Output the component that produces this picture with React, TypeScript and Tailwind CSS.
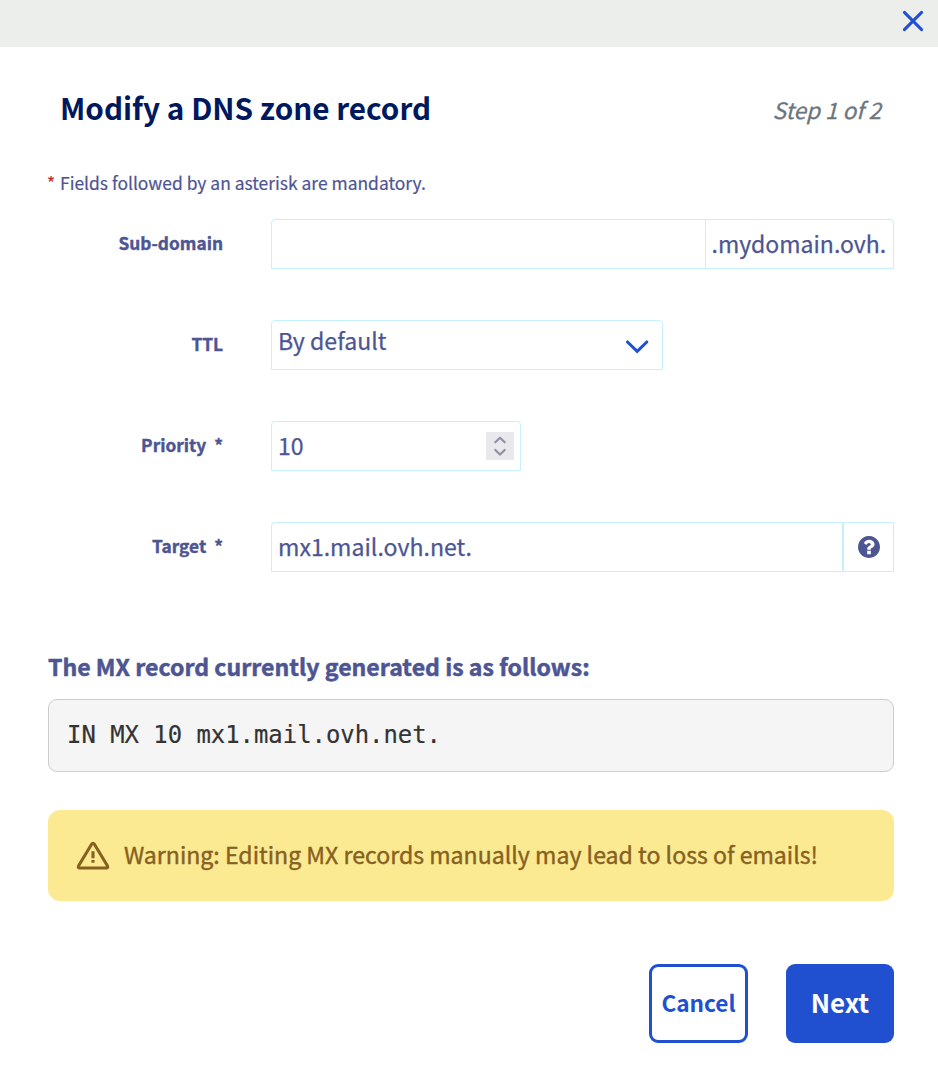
import type { ReactNode } from "react";

function Field({ label, required, children }: { label: string; required?: boolean; children: ReactNode }) {
  return (
    <div className="flex h-[50px] items-stretch">
      <label className="mr-12 flex w-[175px] items-center justify-end gap-[8px] pb-[3px] text-[17.3px] leading-[25px] font-bold [-webkit-text-stroke:0.4px]">
        <span>{label}</span>
        {required && <span>*</span>}
      </label>
      {children}
    </div>
  );
}

function CloseIcon() {
  return (
    <svg width="24" height="24" viewBox="0 0 24 24" fill="none" stroke="#2050d0" strokeWidth="3" strokeLinecap="round">
      <path d="M3.4 3.4l17.2 17.2M20.6 3.4L3.4 20.6" />
    </svg>
  );
}

function ChevronDown() {
  return (
    <svg width="24" height="16" viewBox="0 0 24 16" fill="none" stroke="#2050d0" strokeWidth="3.1" strokeLinecap="round">
      <path d="M2.5 3l9.7 9.3L21.8 3" />
    </svg>
  );
}

function Stepper() {
  return (
    <svg width="28" height="28" viewBox="0 0 28 28" fill="none" stroke="#8f8f9d" strokeWidth="2.2" strokeLinecap="round" strokeLinejoin="round" className="bg-[#e9e9ed]">
      <path d="M9.3 10.3L14 5.8l4.7 4.5M9.3 18l4.7 4.5 4.7-4.5" />
    </svg>
  );
}

function HelpIcon() {
  return (
    <svg width="22" height="22" viewBox="128 128 1536 1536" fill="#4d5592">
      <path d="M1024 1376v-192q0-14-9-23t-23-9h-192q-14 0-23 9t-9 23v192q0 14 9 23t23 9h192q14 0 23-9t9-23zm256-672q0-88-55.5-163t-138.5-116-170-41q-243 0-371 213-15 24 8 42l132 100q7 6 19 6 16 0 25-12 53-68 86-92 34-24 86-24 48 0 85.5 26t37.5 59q0 38-20 61t-68 45q-63 28-115.5 86.5t-52.5 125.5v36q0 14 9 23t23 9h192q14 0 23-9t9-23q0-19 21.5-49.5t54.5-49.5q32-18 49-28.5t46-35 44.5-48 28-60.5 12.5-81zm384 192q0 209-103 385.5t-279.5 279.5-385.5 103-385.5-103-279.5-279.5-103-385.5 103-385.5 279.5-279.5 385.5-103 385.5 103 279.5 279.5 103 385.5z" />
    </svg>
  );
}

function WarningIcon() {
  return (
    <svg width="34" height="30" viewBox="0 0 34 30" fill="none" stroke="#86611f" strokeWidth="3.1" strokeLinejoin="round">
      <path d="M15.6 3.2L2.6 24.8Q1.6 27 3.8 27H30.2Q32.4 27 31.4 24.8L18.4 3.2Q17 1.2 15.6 3.2Z" />
      <path d="M17 10.3v7M17 19v2.8" />
    </svg>
  );
}

export default function App() {
  return (
    <main className="h-[1074px] w-[938px] overflow-hidden bg-white font-['Noto_Sans_CJK_SC',sans-serif] text-[#4d5592]">
      <header className="flex h-[47px] justify-end bg-[#eceeeb] pt-[9px] pr-[13px]">
        <button type="button" aria-label="Close" className="h-6 w-6">
          <CloseIcon />
        </button>
      </header>

      <div className="pr-11 pl-12">
        <div className="flex h-[126px] items-start justify-between pr-[13px] pl-3">
          <h1 className="mt-[41px] text-[29.7px] leading-[40px] font-bold text-[#00185e]">Modify a DNS zone record</h1>
          <p className="mt-[46px] text-[22.5px] leading-[32px] text-[#6c757d] italic [-webkit-text-stroke:0.3px]">Step 1 of 2</p>
        </div>

        <p className="flex h-[46px] gap-[6px] text-[17.45px] leading-[20px] [-webkit-text-stroke:0.2px]">
          <span className="-ml-px w-[7px] text-[#cd2c2c]">*</span>
          <span>Fields followed by an asterisk are mandatory.</span>
        </p>

        <form className="flex flex-col gap-[51px] text-[23.1px] [-webkit-text-stroke:0.25px]">
          <Field label="Sub-domain">
            <div className="flex flex-1 rounded-t-[4px] border border-[#c5f1fc]">
              <div className="flex-1" />
              <div className="flex w-[188px] items-center border-l border-[#c5f1fc] pb-px pl-[5.5px] text-[23px]">.mydomain.ovh.</div>
            </div>
          </Field>
          <Field label="TTL">
            <div className="flex w-[392px] justify-between rounded-t-[4px] border border-[#c5f1fc] pr-[13px] pl-[6px]">
              <span className="mt-[3px] h-[34px] leading-[33px]">By default</span>
              <span className="mt-[18px]">
                <ChevronDown />
              </span>
            </div>
          </Field>
          <Field label="Priority" required>
            <div className="flex w-[250px] items-center justify-between rounded-t-[4px] border border-[#c5f1fc] pr-[6px] pl-[6px]">
              <span className="pb-px">10</span>
              <Stepper />
            </div>
          </Field>
          <Field label="Target" required>
            <div className="flex w-[572px] items-center rounded-tl-[4px] border border-[#c5f1fc] pb-[2px] pl-[6px]">mx1.mail.ovh.net.</div>
            <div className="flex w-[51px] items-center justify-center border border-[#c5f1fc]">
              <HelpIcon />
            </div>
          </Field>
        </form>

        <h2 className="mt-[77px] h-[50px] text-[23.1px] leading-[34px] font-bold [-webkit-text-stroke:0.5px]">
          The MX record currently generated is as follows:
        </h2>

        <pre className="flex h-[73px] items-center rounded-[9px] border border-[#ccc] bg-[#f5f5f5] pt-px pl-[18px] font-['DejaVu_Sans_Mono',monospace] text-[23.9px] text-[#333] [-webkit-text-stroke:0.2px]">
          IN MX 10 mx1.mail.ovh.net.
        </pre>

        <div role="alert" className="mt-[38px] flex h-[91px] items-center gap-[14px] rounded-[12px] bg-[#fcea92] pl-7 text-[23.1px] text-[#86611f] [-webkit-text-stroke:0.4px]">
          <WarningIcon />
          <span className="pb-[3px]">Warning: Editing MX records manually may lead to loss of emails!</span>
        </div>

        <div className="mt-[63px] flex h-[79px] justify-end gap-[38px] font-bold">
          <button type="button" className="w-[99px] rounded-[9px] border-[3px] border-[#2050d0] pb-px text-[22.6px] text-[#2050d0]">
            Cancel
          </button>
          <button type="button" className="w-[108px] rounded-[9px] bg-[#2050d0] pb-[3px] text-[25.8px] text-white">
            Next
          </button>
        </div>
      </div>
    </main>
  );
}
